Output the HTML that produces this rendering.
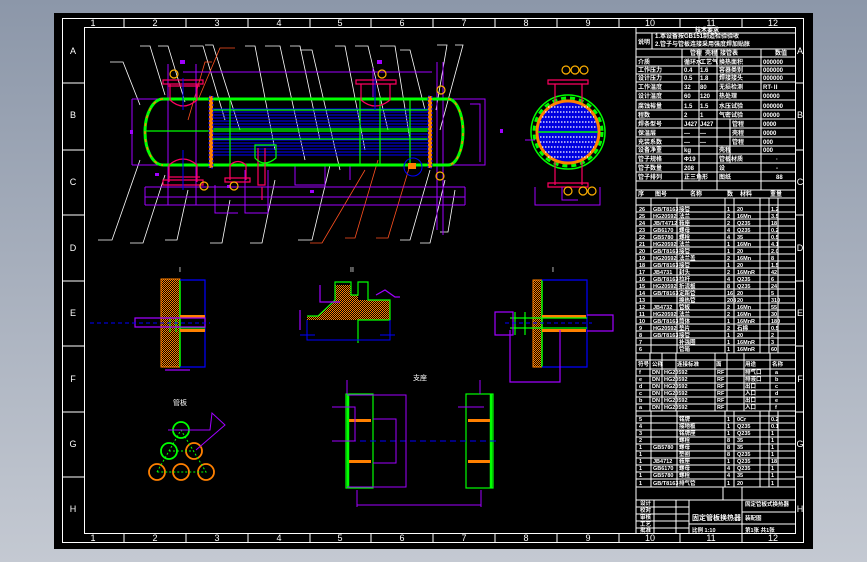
<!DOCTYPE html>
<html><head><meta charset="utf-8"><style>
html,body{margin:0;padding:0;width:867px;height:562px;overflow:hidden;background:linear-gradient(#8c97a9,#c4c9d2);}
svg{position:absolute;left:0;top:0}
text{font-family:"Liberation Sans","Noto Sans CJK SC",sans-serif;fill:#fff}
</style></head><body>
<svg width="867" height="562" viewBox="0 0 867 562" xmlns="http://www.w3.org/2000/svg">
<defs>
<pattern id="h" width="2" height="2" patternUnits="userSpaceOnUse"><rect width="2" height="2" fill="#000"/><rect width="1" height="1" fill="#ff8000"/><rect x="1" y="1" width="1" height="1" fill="#ff8000"/></pattern>
</defs>
<rect x="54" y="13" width="759" height="536" fill="#000"/>
<!-- frame -->
<g stroke="#fff" fill="none" stroke-width="1">
<rect x="62.5" y="18.5" width="741" height="524"/>
<rect x="84.5" y="27.5" width="711" height="506"/>
<path d="M124,18V27M186,18V27M248,18V27M310,18V27M371,18V27M433,18V27M495,18V27M557,18V27M619,18V27M680,18V27M742,18V27
M124,534V543M186,534V543M248,534V543M310,534V543M371,534V543M433,534V543M495,534V543M557,534V543M619,534V543M680,534V543M742,534V543
M62,83H84M62,150H84M62,215H84M62,281H84M62,346H84M62,412H84M62,477H84
M796,83H804M796,150H804M796,215H804M796,281H804M796,346H804M796,412H804M796,477H804"/>
</g>
<g font-size="9" text-anchor="middle">
<text x="93" y="26">1</text><text x="155" y="26">2</text><text x="217" y="26">3</text><text x="279" y="26">4</text><text x="340" y="26">5</text><text x="402" y="26">6</text><text x="464" y="26">7</text><text x="526" y="26">8</text><text x="588" y="26">9</text><text x="650" y="26">10</text><text x="711" y="26">11</text><text x="773" y="26">12</text>
<text x="93" y="541">1</text><text x="155" y="541">2</text><text x="217" y="541">3</text><text x="279" y="541">4</text><text x="340" y="541">5</text><text x="402" y="541">6</text><text x="464" y="541">7</text><text x="526" y="541">8</text><text x="588" y="541">9</text><text x="650" y="541">10</text><text x="711" y="541">11</text><text x="773" y="541">12</text>
<text x="73" y="54">A</text><text x="73" y="118">B</text><text x="73" y="185">C</text><text x="73" y="251">D</text><text x="73" y="316">E</text><text x="73" y="382">F</text><text x="73" y="447">G</text><text x="73" y="512">H</text>
<text x="800" y="54">A</text><text x="800" y="118">B</text><text x="800" y="185">C</text><text x="800" y="251">D</text><text x="800" y="316">E</text><text x="800" y="382">F</text><text x="800" y="447">G</text><text x="800" y="512">H</text>
</g>

<!-- main vessel: white leaders -->
<g stroke="#fff" stroke-width="0.8" fill="none">
<path d="M110,62H123L140,105M140,46H150L165,95M158,46H168L185,102M190,46H203L225,120M205,45H213L240,130M245,46H255L275,150M265,46H280L305,160M290,46H300L320,140M300,50H312L340,170M335,46H345L365,150M355,46H368L388,130M380,46H395L410,140M400,50H410L425,110M437,45H447L436,110M455,45H463L440,130
M98,240H112L140,160M130,243H143L165,175M165,240H177L188,190M210,243H222L230,200M250,243H262L275,180M298,240H312L330,165M400,240H410L430,170M420,243H430L445,180M440,232H448L455,190"/>
</g>
<g stroke="#ff5020" stroke-width="0.8" fill="none"><path d="M188,120L205,62H212M198,100L220,48H235M310,243H322L365,170M345,238H355L378,160M376,238H388L410,165"/></g>

<!-- dimension lines magenta -->
<g stroke="#a000ff" stroke-width="1" fill="none">
<path d="M183,72H432M132,99V165M132,99H210M132,165H210M145,187H465M145,197H465M145,205H465M145,187V205M465,187V205M440,99H485V165H440M470,104H480V162M168,64V205M196,64V205M245,170V213H268V170M373,68V97M215,185V213H238M350,170V180M437,62V230M443,62V235M295,165V185H325V165M350,165V180"/>
</g>
<g fill="#a000ff"><rect x="180" y="60" width="5" height="4"/><rect x="377" y="60" width="5" height="4"/><rect x="130" y="130" width="3" height="4"/><rect x="155" y="173" width="4" height="3"/><rect x="227" y="185" width="4" height="3"/><rect x="310" y="190" width="4" height="3"/><rect x="500" y="129" width="3" height="4"/></g>

<!-- tubes -->
<g stroke="#0000ff" stroke-width="1">
<path d="M213,109H428M213,112H428M213,115H428M213,118H428M213,121H428M213,124H428M213,127H428M213,134H428M213,137H428M213,140H428M213,143H428M213,146H428M213,149H428M213,152H428M213,155H428"/>
</g>
<g stroke="#00ff00" stroke-width="1.2" fill="none">
<path d="M213,110H428M213,129H428M213,131H428M213,139H428M145,131H210M230,99V165M360,99V165M380,99V165M410,99V165"/>
</g>
<path d="M163,99H448A15,33 0 0 1 448,165H163A18,33 0 0 1 163,99Z" fill="none" stroke="#00ff00" stroke-width="3"/>
<path d="M163,99A18,33 0 0 0 163,165" fill="none" stroke="#ff8000" stroke-width="1.5" stroke-dasharray="3,5"/>
<path d="M448,99A15,33 0 0 1 448,165" fill="none" stroke="#ff8000" stroke-width="1.5" stroke-dasharray="3,5"/>
<rect x="209" y="96" width="4" height="72" fill="#ff8000"/><rect x="209" y="96" width="4" height="72" fill="none" stroke="#0000ff" stroke-dasharray="2,2"/>
<rect x="428" y="96" width="4" height="72" fill="#ff8000"/><rect x="428" y="96" width="4" height="72" fill="none" stroke="#0000ff" stroke-dasharray="2,2"/>
<!-- nozzles -->
<g stroke="#ff0060" stroke-width="1.2" fill="none">
<path d="M170,84V100Q183,112 197,100V84M163,80H203V84H163ZM168,86H200"/>
<path d="M361,84V100Q375,112 390,100V84M356,80H396V84H356Z"/>
<path d="M169,182V165Q183,153 197,165V182M163,180H203V185H163ZM168,177H200"/>
<path d="M230,180V165Q238,158 246,165V180M225,178H250V182H225Z"/>
<path d="M258,148V185H265V148M262,187V200"/>
</g>
<path d="M255,145V158Q264,168 276,158V145Z" fill="none" stroke="#00ff00" stroke-width="1.2"/>
<circle cx="413" cy="167" r="9" fill="none" stroke="#0000ff"/>
<rect x="408" y="163" width="8" height="6" fill="#ff8000"/>
<g stroke="#0000ff" fill="none"><path d="M183,78V110M183,150V190M375,78V110"/></g>
<g fill="none" stroke="#ffb000" stroke-width="1.2"><circle cx="174" cy="74" r="4"/><circle cx="382" cy="74" r="4"/><circle cx="204" cy="186" r="4"/><circle cx="234" cy="186" r="4"/><circle cx="441" cy="90" r="4"/><circle cx="440" cy="176" r="4"/></g>

<!-- end view -->
<circle cx="568" cy="132" r="37" fill="none" stroke="#00ff00" stroke-width="1.5"/>
<circle cx="568" cy="132" r="34" fill="none" stroke="#00ff00" stroke-width="3" stroke-dasharray="5,4"/>
<circle cx="568" cy="132" r="31" fill="#0000e0" stroke="#ff8000" stroke-width="3"/>
<g stroke="#fff" stroke-width="1.2" stroke-dasharray="1.5,1.5"><path d="M548,107H588M545,112H591M542,117H594M540,122H596M540,127H596M540,137H596M540,142H596M542,147H594M545,152H591M548,157H588"/></g>
<path d="M538,132H598" stroke="#00ff00" stroke-width="1.5"/>
<g stroke="#ff0060" stroke-width="1.2" fill="none"><path d="M555,84V102M582,84V102M548,80H588V84H548ZM555,162V185M582,162V185M548,183H588V187H548Z"/></g>
<g stroke="#a000ff" fill="none"><path d="M535,187V205H600V187M562,187V200H578M525,140H535"/></g>
<g fill="none" stroke="#ffb000" stroke-width="1.2"><circle cx="566" cy="70" r="4"/><circle cx="575" cy="70" r="4"/><circle cx="584" cy="70" r="4"/><circle cx="568" cy="191" r="4"/><circle cx="583" cy="191" r="4"/><circle cx="592" cy="191" r="4"/></g>

<!-- detail left -->
<text x="180" y="272" font-size="7" text-anchor="middle">I</text>
<rect x="161" y="279" width="19" height="88" fill="url(#h)" stroke="#ff8000"/>
<path d="M180,280V367" stroke="#00ff00" stroke-width="1.5"/>
<path d="M180,280H205V367H180" fill="none" stroke="#0000ff" stroke-width="1.2"/>
<rect x="180" y="315" width="25" height="3" fill="#ff8000"/><rect x="180" y="329" width="25" height="3" fill="#ff8000"/>
<path d="M180,318H205M180,328H205M170,318V332M176,318V332" stroke="#00ff00"/>
<path d="M135,318H205V327H135Z M165,370H190" fill="none" stroke="#a000ff" stroke-width="1.2"/>
<path d="M90,323H210" stroke="#0000ff" stroke-dasharray="4,3"/>
<!-- detail right -->
<text x="553" y="272" font-size="7" text-anchor="middle">I</text>
<rect x="533" y="280" width="9" height="87" fill="url(#h)" stroke="#ff8000"/>
<path d="M542,280V367" stroke="#00ff00" stroke-width="1.5"/>
<path d="M542,280H587V367H542" fill="none" stroke="#0000ff" stroke-width="1.2"/>
<rect x="542" y="315" width="44" height="3" fill="#ff8000"/><rect x="542" y="329" width="44" height="3" fill="#ff8000"/>
<path d="M510,318H587M510,328H587M515,312V335M525,312V335" stroke="#00ff00" stroke-width="1.2"/>
<path d="M495,312H513V335H495ZM587,315H613V331H587M510,330V382H560V330" fill="none" stroke="#a000ff" stroke-width="1.2"/>
<path d="M505,323H592" stroke="#0000ff" stroke-dasharray="4,3"/>
<!-- detail middle -->
<text x="352" y="272" font-size="7" text-anchor="middle">II</text>
<path d="M307,316H318L335,300V285H351V295H358V320H307Z" fill="url(#h)"/>
<path d="M358,300H390V320H358Z" fill="url(#h)"/>
<path d="M307,316H318L335,300V282H351V295H358V282H368V300H390V320H358V343" fill="none" stroke="#00ff00" stroke-width="1.2"/>
<path d="M307,320V340H390V320M300,335H315M380,335H395" fill="none" stroke="#0000ff"/>
<path d="M300,310V330M320,285V302H340M376,295L385,290L395,297H400" fill="none" stroke="#a000ff" stroke-width="1.2"/>
<!-- tube pattern -->
<text x="180" y="405" font-size="7" text-anchor="middle">管板</text>
<g fill="none" stroke-width="1.8"><circle cx="181" cy="430" r="8" stroke="#00ff00"/><circle cx="169" cy="451" r="8" stroke="#00ff00"/><circle cx="194" cy="451" r="8" stroke="#ff8000"/><circle cx="157" cy="472" r="8" stroke="#ff8000"/><circle cx="181" cy="472" r="8" stroke="#ff8000"/><circle cx="206" cy="472" r="8" stroke="#ff8000"/></g>
<path d="M157,472L181,430L206,472ZM169,451H194" fill="none" stroke="#00ff00" stroke-dasharray="2,2"/>
<path d="M168,430H210L212,413L225,425L196,450" fill="none" stroke="#a000ff"/>
<!-- bottom detail -->
<text x="420" y="380" font-size="7" text-anchor="middle">支座</text>
<rect x="346" y="394" width="27" height="94" fill="none" stroke="#00ff00" stroke-width="1.2"/>
<path d="M348,394V488" stroke="#00ff00" stroke-width="2.5"/>
<rect x="349" y="419" width="22" height="3" fill="#ff8000"/><rect x="349" y="460" width="22" height="3" fill="#ff8000"/>
<rect x="466" y="394" width="27" height="94" fill="none" stroke="#00ff00" stroke-width="1.2"/>
<path d="M491,394V488" stroke="#00ff00" stroke-width="2.5"/>
<rect x="468" y="419" width="22" height="3" fill="#ff8000"/><rect x="468" y="460" width="22" height="3" fill="#ff8000"/>
<path d="M340,441H498" stroke="#0000ff" stroke-dasharray="6,4"/>
<path d="M347,395H406V487H347M373,419H396V463H373M332,407H355V441H332M357,505H481M357,490V507M481,490V507M347,380V394M458,407H484M480,380V394" fill="none" stroke="#a000ff" stroke-width="1"/>

<!-- table -->
<g stroke="#fff" stroke-width="1" fill="none">
<path d="M636,27V533M636,33H795M636,49H795M636,57H795M636,66H795M636,74H795M636,82H795M636,91H795M636,100H795M636,110H795M636,119H795M636,128H795M636,137H795M636,146H795M636,154H795M636,163H795M636,172H795M636,181H795M636,190H795M636,198H795
M652,33V49M682,49V190M699,49V181M717,49V190M761,49V190M730,119V163
M636,205H795M636,212H795M636,219H795M636,226H795M636,233H795M636,240H795M636,247H795M636,254H795M636,261H795M636,268H795M636,275H795M636,282H795M636,289H795M636,296H795M636,303H795M636,310H795M636,317H795M636,324H795M636,331H795M636,338H795M636,345H795M636,353H795
M651,198V353M677,198V353M725,198V353M734,198V353M760,198V353M769,198V353M778,198V353
M636,360H795M636,369H795M636,376H795M636,383H795M636,390H795M636,397H795M636,404H795M636,411H795M636,416H795M636,423H795M636,430H795M636,437H795M636,444H795M636,451H795M636,458H795M636,465H795M636,472H795M636,479H795M636,487H795
M650,353V411M662,353V411M676,353V411M715,353V411M727,353V411M744,353V411M770,353V411
M651,411V487M677,411V487M725,411V487M734,411V487M760,411V487M769,411V487M778,411V487
M636,500H795M723,487V500M742,487V533M689,500V533M654,500V533M676,500V533M636,507H689M636,514H689M636,521H689M636,528H689M742,512H795M742,524H795M689,524H742"/>
</g>
<g font-size="6" font-weight="bold">
<text x="707" y="32" text-anchor="middle">技术要求</text>
<text x="638" y="44">说明</text><text x="655" y="38">1.本设备按GB151制造检验验收</text><text x="655" y="46">2.管子与管板连接采用强度焊加贴胀</text>
<text x="690" y="55">管程</text><text x="705" y="55">壳程</text><text x="720" y="55">接管表</text><text x="775" y="55">数值</text>
<text x="638" y="64">介质</text><text x="684" y="64">循环水</text><text x="700" y="64">工艺气</text><text x="719" y="64">换热面积</text><text x="763" y="64">000000</text>
<text x="638" y="72">工作压力</text><text x="684" y="72">0.4</text><text x="700" y="72">1.6</text><text x="719" y="72">容器类别</text><text x="763" y="72">000000</text>
<text x="638" y="80">设计压力</text><text x="684" y="80">0.5</text><text x="700" y="80">1.8</text><text x="719" y="80">焊接接头</text><text x="763" y="80">000000</text>
<text x="638" y="89">工作温度</text><text x="684" y="89">32</text><text x="700" y="89">80</text><text x="719" y="89">无损检测</text><text x="763" y="89">RT-Ⅱ</text>
<text x="638" y="98">设计温度</text><text x="684" y="98">60</text><text x="700" y="98">120</text><text x="719" y="98">热处理</text><text x="763" y="98">00000</text>
<text x="638" y="108">腐蚀裕量</text><text x="684" y="108">1.5</text><text x="700" y="108">1.5</text><text x="719" y="108">水压试验</text><text x="763" y="108">000000</text>
<text x="638" y="117">程数</text><text x="684" y="117">2</text><text x="700" y="117">1</text><text x="719" y="117">气密试验</text><text x="763" y="117">00000</text>
<text x="638" y="126">焊条型号</text><text x="684" y="126">J427</text><text x="700" y="126">J427</text><text x="732" y="126">管程</text><text x="763" y="126">0000</text>
<text x="638" y="135">保温层</text><text x="684" y="135">—</text><text x="700" y="135">—</text><text x="732" y="135">壳程</text><text x="763" y="135">0000</text>
<text x="638" y="144">充装系数</text><text x="684" y="144">—</text><text x="700" y="144">—</text><text x="732" y="144">管程</text><text x="763" y="144">000</text>
<text x="638" y="152">设备净重</text><text x="684" y="152">kg</text><text x="719" y="152">壳程</text><text x="763" y="152">000</text>
<text x="638" y="161">管子规格</text><text x="684" y="161">Φ19</text><text x="719" y="161">管板材质</text><text x="776" y="161">·</text>
<text x="638" y="170">管子数量</text><text x="684" y="170">208</text><text x="719" y="170">设</text><text x="776" y="170">-</text>
<text x="638" y="179">管子排列</text><text x="684" y="179">正三角形</text><text x="719" y="179">图纸</text><text x="776" y="179">88</text>
<text x="638" y="196">序</text><text x="655" y="196">图号</text><text x="690" y="196">名称</text><text x="727" y="196">数</text><text x="740" y="196">材料</text><text x="770" y="196">重量</text>
</g>
<g font-size="5.5" font-weight="bold">
<text x="639" y="211">26</text><text x="653" y="211">GB/T8163</text><text x="679" y="211">接管</text><text x="727" y="211">1</text><text x="737" y="211">20</text><text x="771" y="211">1.2</text>
<text x="639" y="218">25</text><text x="653" y="218">HG20592</text><text x="679" y="218">法兰</text><text x="727" y="218">2</text><text x="737" y="218">16Mn</text><text x="771" y="218">3.5</text>
<text x="639" y="225">24</text><text x="653" y="225">JB/T4712</text><text x="679" y="225">鞍座</text><text x="727" y="225">2</text><text x="737" y="225">Q235</text><text x="771" y="225">18</text>
<text x="639" y="232">23</text><text x="653" y="232">GB6170</text><text x="679" y="232">螺母</text><text x="727" y="232">4</text><text x="737" y="232">Q235</text><text x="771" y="232">0.2</text>
<text x="639" y="239">22</text><text x="653" y="239">GB5780</text><text x="679" y="239">螺栓</text><text x="727" y="239">4</text><text x="737" y="239">35</text><text x="771" y="239">0.5</text>
<text x="639" y="246">21</text><text x="653" y="246">HG20592</text><text x="679" y="246">法兰</text><text x="727" y="246">1</text><text x="737" y="246">16Mn</text><text x="771" y="246">4.1</text>
<text x="639" y="253">20</text><text x="653" y="253">GB/T8163</text><text x="679" y="253">接管</text><text x="727" y="253">1</text><text x="737" y="253">20</text><text x="771" y="253">2.0</text>
<text x="639" y="260">19</text><text x="653" y="260">HG20592</text><text x="679" y="260">法兰盖</text><text x="727" y="260">2</text><text x="737" y="260">16Mn</text><text x="771" y="260">8</text>
<text x="639" y="267">18</text><text x="653" y="267">GB/T8163</text><text x="679" y="267">接管</text><text x="727" y="267">1</text><text x="737" y="267">20</text><text x="771" y="267">1.5</text>
<text x="639" y="274">17</text><text x="653" y="274">JB4731</text><text x="679" y="274">封头</text><text x="727" y="274">2</text><text x="737" y="274">16MnR</text><text x="771" y="274">42</text>
<text x="639" y="281">16</text><text x="653" y="281">GB/T8163</text><text x="679" y="281">拉杆</text><text x="727" y="281">4</text><text x="737" y="281">Q235</text><text x="771" y="281">6</text>
<text x="639" y="288">15</text><text x="653" y="288">HG20592</text><text x="679" y="288">折流板</text><text x="727" y="288">8</text><text x="737" y="288">Q235</text><text x="771" y="288">24</text>
<text x="639" y="295">14</text><text x="653" y="295">GB/T8163</text><text x="679" y="295">定距管</text><text x="727" y="295">16</text><text x="737" y="295">20</text><text x="771" y="295">5</text>
<text x="639" y="302">13</text><text x="679" y="302">换热管</text><text x="727" y="302">208</text><text x="737" y="302">20</text><text x="771" y="302">310</text>
<text x="639" y="309">12</text><text x="653" y="309">JB4732</text><text x="679" y="309">管板</text><text x="727" y="309">2</text><text x="737" y="309">16Mn</text><text x="771" y="309">55</text>
<text x="639" y="316">11</text><text x="653" y="316">HG20592</text><text x="679" y="316">法兰</text><text x="727" y="316">2</text><text x="737" y="316">16Mn</text><text x="771" y="316">30</text>
<text x="639" y="323">10</text><text x="653" y="323">GB/T8163</text><text x="679" y="323">筒体</text><text x="727" y="323">1</text><text x="737" y="323">16MnR</text><text x="771" y="323">180</text>
<text x="639" y="330">9</text><text x="653" y="330">HG20592</text><text x="679" y="330">垫片</text><text x="727" y="330">2</text><text x="737" y="330">石棉</text><text x="771" y="330">0.5</text>
<text x="639" y="337">8</text><text x="653" y="337">GB/T8163</text><text x="679" y="337">接管</text><text x="727" y="337">1</text><text x="737" y="337">20</text><text x="771" y="337">2</text>
<text x="639" y="344">7</text><text x="679" y="344">补强圈</text><text x="727" y="344">1</text><text x="737" y="344">16MnR</text><text x="771" y="344">3</text>
<text x="639" y="351">6</text><text x="679" y="351">管箱</text><text x="727" y="351">1</text><text x="737" y="351">16MnR</text><text x="771" y="351">60</text>
<text x="638" y="366">符号</text><text x="652" y="366">公称</text><text x="677" y="366">连接标准</text><text x="716" y="366">面</text><text x="745" y="366">用途</text><text x="772" y="366">名称</text>
<text x="639" y="374">f</text><text x="652" y="374">DN</text><text x="664" y="374">HG20592</text><text x="717" y="374">RF</text><text x="745" y="374">排气口</text><text x="775" y="374">a</text>
<text x="639" y="381">e</text><text x="652" y="381">DN</text><text x="664" y="381">HG20592</text><text x="717" y="381">RF</text><text x="745" y="381">排液口</text><text x="775" y="381">b</text>
<text x="639" y="388">d</text><text x="652" y="388">DN</text><text x="664" y="388">HG20592</text><text x="717" y="388">RF</text><text x="745" y="388">出口</text><text x="775" y="388">c</text>
<text x="639" y="395">c</text><text x="652" y="395">DN</text><text x="664" y="395">HG20592</text><text x="717" y="395">RF</text><text x="745" y="395">入口</text><text x="775" y="395">d</text>
<text x="639" y="402">b</text><text x="652" y="402">DN</text><text x="664" y="402">HG20592</text><text x="717" y="402">RF</text><text x="745" y="402">出口</text><text x="775" y="402">e</text>
<text x="639" y="409">a</text><text x="652" y="409">DN</text><text x="664" y="409">HG20592</text><text x="717" y="409">RF</text><text x="745" y="409">入口</text><text x="775" y="409">f</text>
<text x="639" y="421">5</text><text x="679" y="421">铭牌</text><text x="727" y="421">1</text><text x="737" y="421">0Cr</text><text x="771" y="421">0.2</text>
<text x="639" y="428">4</text><text x="679" y="428">接地板</text><text x="727" y="428">1</text><text x="737" y="428">Q235</text><text x="771" y="428">0.1</text>
<text x="639" y="435">3</text><text x="679" y="435">铭牌座</text><text x="727" y="435">1</text><text x="737" y="435">Q235</text><text x="771" y="435">1</text>
<text x="639" y="442">2</text><text x="679" y="442">螺栓</text><text x="727" y="442">8</text><text x="737" y="442">35</text><text x="771" y="442">1</text>
<text x="639" y="449">1</text><text x="653" y="449">GB5780</text><text x="679" y="449">螺母</text><text x="727" y="449">8</text><text x="737" y="449">35</text><text x="771" y="449">1</text>
<text x="639" y="456">1</text><text x="679" y="456">垫圈</text><text x="727" y="456">8</text><text x="737" y="456">Q235</text><text x="771" y="456">1</text>
<text x="639" y="463">1</text><text x="653" y="463">JB4712</text><text x="679" y="463">鞍座</text><text x="727" y="463">1</text><text x="737" y="463">Q235</text><text x="771" y="463">18</text>
<text x="639" y="470">1</text><text x="653" y="470">GB6170</text><text x="679" y="470">螺母</text><text x="727" y="470">4</text><text x="737" y="470">Q235</text><text x="771" y="470">1</text>
<text x="639" y="477">1</text><text x="653" y="477">GB5780</text><text x="679" y="477">螺栓</text><text x="727" y="477">4</text><text x="737" y="477">35</text><text x="771" y="477">1</text>
<text x="639" y="485">1</text><text x="653" y="485">GB/T8163</text><text x="679" y="485">排气管</text><text x="727" y="485">1</text><text x="737" y="485">20</text><text x="771" y="485">1</text>
<text x="640" y="505">设计</text><text x="640" y="512">校对</text><text x="640" y="519">审核</text><text x="640" y="526">工艺</text><text x="640" y="532">批准</text>
<text x="745" y="506">固定管板式换热器</text><text x="745" y="520">装配图</text>
<text x="692" y="520" font-size="7">固定管板换热器</text><text x="692" y="532">比例 1:10</text><text x="745" y="532">第1张 共1张</text>
</g>
</svg>
</body></html>
